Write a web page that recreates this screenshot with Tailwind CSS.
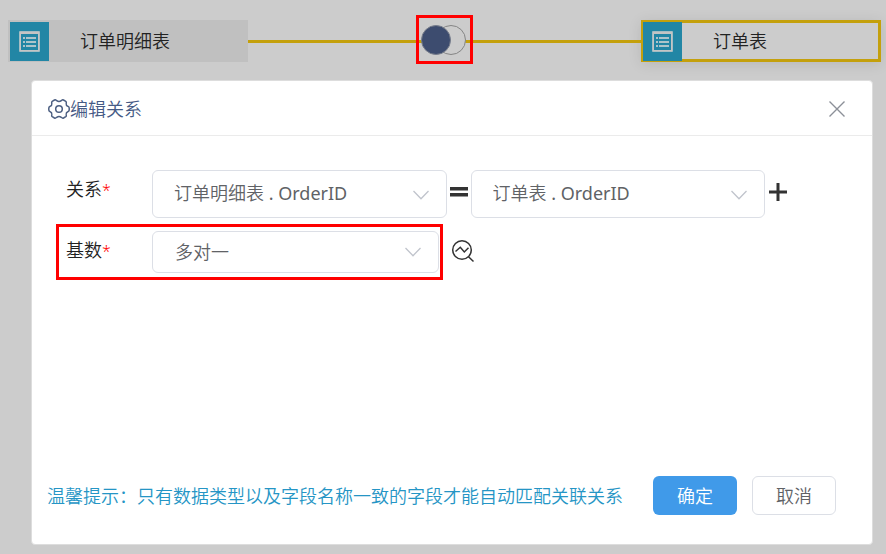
<!DOCTYPE html>
<html lang="zh-CN">
<head>
<meta charset="utf-8">
<meta name="viewport" content="width=device-width, initial-scale=1">
<title>编辑关系</title>
<script src="https://cdn.jsdelivr.net/npm/@tailwindcss/browser@4"></script>
</head>
<body class="flex min-h-screen flex-col bg-[#ccc] pb-[9px] font-['Noto_Sans','Noto_Sans_CJK_SC',sans-serif] text-lg font-[350] text-[#222]">
  <svg class="hidden" aria-hidden="true">
    <symbol id="table" viewBox="0 0 21 21">
      <path d="M.5 .5h20v20H.5z" fill="none" stroke="#a5bdc3"/>
      <path d="M1 1h19v2H1zM1 3h1v17H1zM19 3h1v17h-1zM1 19h19v1H1z" fill="#c4c4c4"/>
      <path d="M4 6h2v2H4zM7 6h10v2H7zM4 10h2v2H4zM7 10h10v2H7zM4 14h2v2H4zM7 14h10v2H7z" fill="#adc4ca"/>
    </symbol>
    <symbol id="chevron" viewBox="0 0 16 10">
      <path d="M.5 1 8 8.700 15.500 1" fill="none" stroke="#c0c4cc" stroke-width="1.300"/>
    </symbol>
  </svg>

  <header class="flex pt-5 pr-[5px] pl-2">
    <div class="flex h-[42px] w-60 items-center bg-[#c0c0c0] pl-[2px]">
      <span class="flex h-[39px] w-[39px] items-center justify-center bg-[#2286a5]"><svg class="h-[21px] w-[21px]"><use href="#table"/></svg></span>
      <span class="pl-[31px]">订单明细表</span>
    </div>
    <div class="relative flex h-[42px] flex-1 items-center">
      <div class="h-[3px] w-full bg-[#c4a00c]"></div>
      <div class="absolute -top-[5px] left-[168px] flex h-[49px] w-[57px] items-center justify-center border-3 border-[#f00]">
        <svg class="h-8 w-[47px]" viewBox="0 0 47 32" role="img" aria-label="左连接">
          <circle cx="30" cy="16" r="14.500" fill="#ccc" stroke="#858585"/>
          <circle cx="15" cy="16" r="14.500" fill="#3d4c6f" stroke="#777d8b"/>
        </svg>
      </div>
    </div>
    <div class="flex h-[42px] w-60 items-center border-y-3 border-r-3 border-l-2 border-[#c4a00c] shadow-[0_2px_14px_rgba(0,0,0,0.1)]">
      <span class="flex h-[39px] w-[39px] items-center justify-center bg-[#2286a5]"><svg class="h-[21px] w-[21px]"><use href="#table"/></svg></span>
      <span class="pl-[31px]">订单表</span>
    </div>
  </header>

  <main role="dialog" aria-labelledby="title" class="mt-[18px] mr-[13px] ml-[31px] flex flex-1 flex-col rounded-sm border border-[#ddd] bg-white pt-px">
    <div class="flex h-[54px] items-center border-b border-[#ebebeb] pr-[26px] pl-4">
      <svg class="h-[22px] w-[22px]" viewBox="0 0 22 22" fill="none" stroke="#4c5f82" stroke-width="1.500" stroke-linejoin="round" aria-hidden="true">
        <path d="M6.500 2 C7.500 1.500 8 2 8.700 2.700 Q11 4.300 13.300 2.700 C14 2 14.500 1.500 15.500 2 L17.800 3.300 C18.700 4 18.400 4.800 18.200 5.600 Q18 7.800 19.800 8.300 C20.800 8.600 21.200 9 21.200 10 V12 C21.200 13 20.800 13.400 19.800 13.700 Q18 14.200 18.200 16.400 C18.400 17.200 18.700 18 17.800 18.700 L15.500 20 C14.500 20.500 14 20 13.300 19.300 Q11 17.700 8.700 19.300 C8 20 7.500 20.500 6.500 20 L4.200 18.700 C3.300 18 3.600 17.200 3.800 16.400 Q4 14.200 2.200 13.700 C1.200 13.400 .8 13 .8 12 V10 C.8 9 1.200 8.600 2.200 8.300 Q4 7.800 3.800 5.600 C3.600 4.800 3.300 4 4.200 3.300 Z"/>
        <circle cx="11" cy="11" r="3.300"/>
      </svg>
      <h1 id="title" class="flex-1 text-[#455a85]">编辑关系</h1>
      <button type="button" aria-label="关闭" class="p-px"><svg class="h-4 w-4" viewBox="0 0 16 16" fill="none" stroke="#8c9098" stroke-width="1.400"><path d="M.5 .5l15 15M15.500 .5l-15 15"/></svg></button>
    </div>

    <form class="flex flex-1 flex-col">
      <div class="flex items-start pt-[34px] pr-[85px] pl-[34px]">
        <label for="left" class="w-[86px] shrink-0 leading-[38px]">关系<span class="text-base text-[#f00]">*</span></label>
        <div class="relative flex-1">
          <select id="left" class="h-12 w-full appearance-none rounded-md border border-[#dcdfe6] bg-white pr-8 pb-[2px] pl-[21px] font-['Noto_Sans','Noto_Sans_CJK_SC_DemiLight','Noto_Sans_CJK_SC',sans-serif] font-normal text-[#606266]"><option>订单明细表 . OrderID</option></select>
          <svg class="pointer-events-none absolute top-5 right-[18px] h-[10px] w-4"><use href="#chevron"/></svg>
        </div>
        <svg class="mx-[3px] mt-[13px] h-[18px] w-[18px] shrink-0" viewBox="0 0 18 18" fill="#333" role="img" aria-label="等于"><path d="M0 4h18v3.500H0zM0 10h18v3.500H0z"/></svg>
        <div class="relative flex-1">
          <select id="right" aria-label="关联字段" class="h-12 w-full appearance-none rounded-md border border-[#dcdfe6] bg-white pr-8 pb-[2px] pl-[21px] font-['Noto_Sans','Noto_Sans_CJK_SC_DemiLight','Noto_Sans_CJK_SC',sans-serif] font-normal text-[#606266]"><option>订单表 . OrderID</option></select>
          <svg class="pointer-events-none absolute top-5 right-[18px] h-[10px] w-4"><use href="#chevron"/></svg>
        </div>
        <button type="button" aria-label="添加关系" class="mt-[13px] ml-1"><svg class="h-[18px] w-[18px]" viewBox="0 0 18 18" fill="#333"><path d="M0 7.500h18v3H0zM7.500 0h3v18h-3z"/></svg></button>
      </div>

      <div class="mt-[6px] flex items-center gap-2 pl-6">
        <div class="flex w-[387px] items-start border-3 border-[#f00] py-1 pr-px pl-[7px]">
          <label for="card" class="w-[86px] shrink-0 leading-[38px]">基数<span class="text-base text-[#f00]">*</span></label>
          <div class="relative flex-1">
            <select id="card" class="h-[42px] w-full appearance-none rounded-md border border-[#dcdfe6] bg-white pr-8 pl-[22px] text-[#606266]"><option>多对一</option></select>
            <svg class="pointer-events-none absolute top-4 right-[18px] h-[10px] w-4"><use href="#chevron"/></svg>
          </div>
        </div>
        <button type="button" aria-label="检测基数" class="pb-[2px]"><svg class="h-6 w-6" viewBox="0 0 24 24" fill="none" stroke="#333" stroke-width="1.500"><circle cx="11" cy="11" r="9.300"/><path d="M4.500 12.500 9.300 8.300 13.300 13 17.500 8.800M17.500 17.700 22.500 22.500"/></svg></button>
      </div>

      <footer class="mt-auto flex items-center pr-9 pb-[29px] pl-[15px]">
        <p class="flex-1 text-[#2595c5]">温馨提示：只有数据类型以及字段名称一致的字段才能自动匹配关联关系</p>
        <div class="flex gap-[15px]">
          <button type="button" class="h-[39px] w-[84px] rounded-md bg-[#409ae9] text-white">确定</button>
          <button type="button" class="h-[39px] w-[84px] rounded-md border border-[#dcdfe6] bg-white text-[#606266]">取消</button>
        </div>
      </footer>
    </form>
  </main>
</body>
</html>
